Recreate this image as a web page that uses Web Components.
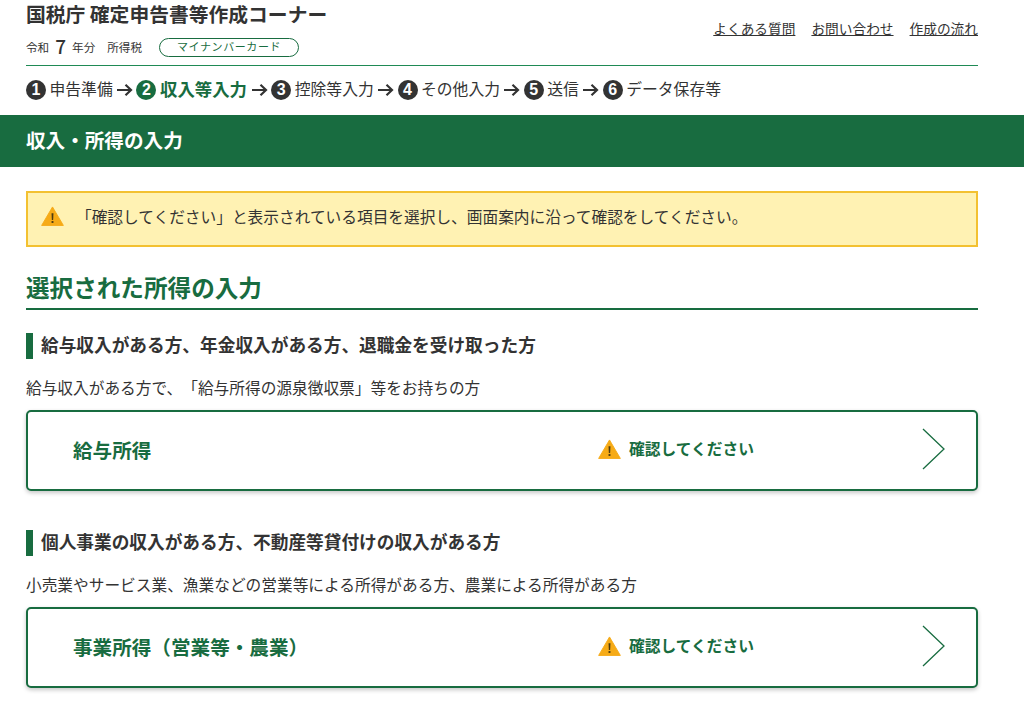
<!DOCTYPE html>
<html lang="ja">
<head>
<meta charset="utf-8">
<title>確定申告書等作成コーナー</title>
<style>
  html, body { margin: 0; padding: 0; background: #fff; height: 715px; overflow: hidden; }
  body { font-family: "Noto Sans CJK JP", "Liberation Sans", sans-serif; color: #333; text-spacing-trim: space-all; }
</style>
</head>
<body>
<tax-app></tax-app>

<script>
(function() {
    const GREEN = "#186c40";

    // warning triangle, shared by the alert and the cards
    const warnIcon = (w, h) => `
        <svg width="${w}" height="${h}" viewBox="0 0 24 21" aria-hidden="true">
            <path d="M12 1 L23.4 20.4 H.6 Z" fill="#f6ab17" stroke="#f6ab17" stroke-width="1" stroke-linejoin="round"/>
            <path d="M11 7.6h2l-.3 7.2h-1.4z" fill="#4b3a10"/>
            <rect x="11" y="15.8" width="2" height="2" fill="#4b3a10"/>
        </svg>`;

    class StepNo extends HTMLElement {
        constructor() {
            super();
            this.attachShadow({ mode: "open" }).innerHTML = `
                <style>
                    :host {
                        display: inline-flex; align-items: center; justify-content: center;
                        width: 20px; height: 20px; border-radius: 50%;
                        background: currentColor; flex: none;
                    }
                    span { color: #fff; font: 700 16px/1 "Liberation Sans", sans-serif; }
                </style>
                <span><slot></slot></span>`;
        }
    }

    class StepBar extends HTMLElement {
        constructor() {
            super();
            const steps = ["申告準備", "収入等入力", "控除等入力", "その他入力", "送信", "データ保存等"];
            const html = steps.map((s, i) => `
                <span class="step ${i == 1 ? "on" : ""}"><step-no>${i + 1}</step-no><b>${s}</b></span>
                ${i < steps.length - 1 ? `<svg width="17" height="14" viewBox="0 0 17 14"><path d="M1 7h14M9.500 1.800 15 7l-5.500 5.200" fill="none" stroke="#333" stroke-width="2.200"/></svg>` : ""}`).join("");
            this.attachShadow({ mode: "open" }).innerHTML = `
                <style>
                    :host { display: flex; align-items: center; gap: 3.400px; height: 49px; padding-bottom: 1px; box-sizing: border-box; font-size: 15.800px; color: #333; }
                    .step { display: inline-flex; align-items: center; gap: 3.500px; }
                    b { font-weight: 400; margin-top: -3px; }
                    .on { color: ${GREEN}; margin-right: .5px; }
                    .on b { font-weight: 700; font-size: 17.400px; }
                </style>
                ${html}`;
        }
    }

    class SiteHeader extends HTMLElement {
        constructor() {
            super();
            this.attachShadow({ mode: "open" }).innerHTML = `
                <style>
                    :host { display: block; margin: 0 46px 0 26px; }
                    .top { display: flex; justify-content: space-between; height: 66px; box-sizing: border-box; border-bottom: 1px solid #1f8a55; }
                    h1 { margin: 0; padding-top: 1px; font-size: 19.800px; line-height: 26px; font-weight: 700; color: #333; white-space: nowrap; }
                    .meta { display: flex; align-items: center; margin-top: 8px; font-size: 11.600px; height: 24px; color: #333; }
                    .year { font-size: 19px; line-height: 1; font-weight: 500; margin: 0 6px 4px; }
                    .tax { margin-left: 12px; }
                    .pill {
                        margin: 1px 0 0 17px; width: 140px; height: 19px; line-height: 14px; box-sizing: border-box;
                        border: 1px solid ${GREEN}; border-radius: 10px; text-align: center;
                        font-size: 11px; letter-spacing: .6px; color: ${GREEN};
                    }
                    nav { display: flex; gap: 16px; padding-top: 18px; font-size: 13.700px; line-height: 20px; }
                    a { color: #333; text-decoration: underline; }
                </style>
                <div class="top">
                    <div>
                        <h1>国税庁 確定申告書等作成コーナー</h1>
                        <div class="meta">令和<span class="year">7</span>年分<span class="tax">所得税</span><span class="pill">マイナンバーカード</span></div>
                    </div>
                    <nav><a href="#">よくある質問</a><a href="#">お問い合わせ</a><a href="#">作成の流れ</a></nav>
                </div>
                <step-bar></step-bar>`;
        }
    }

    class PageBanner extends HTMLElement {
        constructor() {
            super();
            this.attachShadow({ mode: "open" }).innerHTML = `
                <style>
                    :host {
                        display: flex; align-items: center; height: 52px; padding: 0 26px 4px; box-sizing: border-box;
                        background: ${GREEN}; color: #fff; font-size: 19.600px; font-weight: 700;
                    }
                </style>
                <slot></slot>`;
        }
    }

    class AlertBox extends HTMLElement {
        constructor() {
            super();
            this.attachShadow({ mode: "open" }).innerHTML = `
                <style>
                    :host {
                        display: flex; align-items: center; height: 56px; box-sizing: border-box;
                        margin: 24px 46px 0 26px; padding: 0 0 0 13px;
                        background: #fff2b3; border: 2px solid #f3c131;
                        font-size: 15.700px; color: #333;
                    }
                    svg { flex: none; margin-right: 12px; margin-top: -7px; }
                    span { white-space: nowrap; margin-top: -5px; }
                </style>
                ${warnIcon(23, 20)}
                <span><slot></slot></span>`;
        }
    }

    class SectionTitle extends HTMLElement {
        constructor() {
            super();
            this.attachShadow({ mode: "open" }).innerHTML = `
                <style>
                    :host {
                        display: block; margin: 21px 46px 0 26px; height: 42px; box-sizing: border-box;
                        box-shadow: inset 0 -1px 0 rgba(24,108,64,.35), inset 0 -2px 0 ${GREEN};
                        font-size: 23.600px; line-height: 38px; font-weight: 700; color: ${GREEN};
                    }
                </style>
                <slot></slot>`;
        }
    }

    class IncomeCard extends HTMLElement {
        constructor() {
            super();
            this.attachShadow({ mode: "open" }).innerHTML = `
                <style>
                    :host { display: block; margin: 0 46px 0 26px; }
                    .head { height: 26px; border-left: 7px solid ${GREEN}; padding-left: 8px; font-size: 17.680px; line-height: 22px; font-weight: 700; color: #333; white-space: nowrap; }
                    p { margin: 17px 0 0; font-size: 15.700px; line-height: 24px; color: #333; white-space: nowrap; }
                    .card {
                        display: grid; grid-template-columns: 525px 1fr auto; align-items: center;
                        height: 81px; margin-top: 10px; padding: 0 31px 0 45px; box-sizing: border-box;
                        border: 2px solid ${GREEN}; border-radius: 5px; background: #fff;
                        box-shadow: 0 2px 4px rgba(0,0,0,.22);
                    }
                    .name { font-size: 19.600px; font-weight: 700; color: ${GREEN}; white-space: nowrap; margin-top: -3px; }
                    .state { display: flex; align-items: center; gap: 8px; font-size: 15.760px; font-weight: 700; color: ${GREEN}; }
                    .state span { margin-top: -4px; }
                    .state svg { margin-top: -3px; }
                    .go { margin-top: -3px; }
                </style>
                <div class="head"><slot name="title"></slot></div>
                <p><slot name="desc"></slot></p>
                <div class="card">
                    <div class="name"><slot name="name"></slot></div>
                    <div class="state">${warnIcon(23, 20)}<span>確認してください</span></div>
                    <svg class="go" width="23" height="42" viewBox="0 0 23 42"><path d="M1 1 22 21 1 41" fill="none" stroke="${GREEN}" stroke-width="1.300"/></svg>
                </div>`;
        }
    }

    class TaxApp extends HTMLElement {
        constructor() {
            super();
            this.attachShadow({ mode: "open" }).innerHTML = `
                <style>
                    :host { display: block; }
                    .first { margin-top: 23px; }
                    .next { margin-top: 39px; }
                </style>
                <site-header></site-header>
                <page-banner>収入・所得の入力</page-banner>
                <alert-box>「確認してください」と表示されている項目を選択し、画面案内に沿って確認をしてください。</alert-box>
                <section-title>選択された所得の入力</section-title>
                <income-card class="first">
                    <span slot="title">給与収入がある方、年金収入がある方、退職金を受け取った方</span>
                    <span slot="desc">給与収入がある方で、「給与所得の源泉徴収票」等をお持ちの方</span>
                    <span slot="name">給与所得</span>
                </income-card>
                <income-card class="next">
                    <span slot="title">個人事業の収入がある方、不動産等貸付けの収入がある方</span>
                    <span slot="desc">小売業やサービス業、漁業などの営業等による所得がある方、農業による所得がある方</span>
                    <span slot="name">事業所得（営業等・農業）</span>
                </income-card>`;
        }
    }

    customElements.define("step-no", StepNo);
    customElements.define("step-bar", StepBar);
    customElements.define("site-header", SiteHeader);
    customElements.define("page-banner", PageBanner);
    customElements.define("alert-box", AlertBox);
    customElements.define("section-title", SectionTitle);
    customElements.define("income-card", IncomeCard);
    customElements.define("tax-app", TaxApp);
})();
</script>
</body>
</html>
